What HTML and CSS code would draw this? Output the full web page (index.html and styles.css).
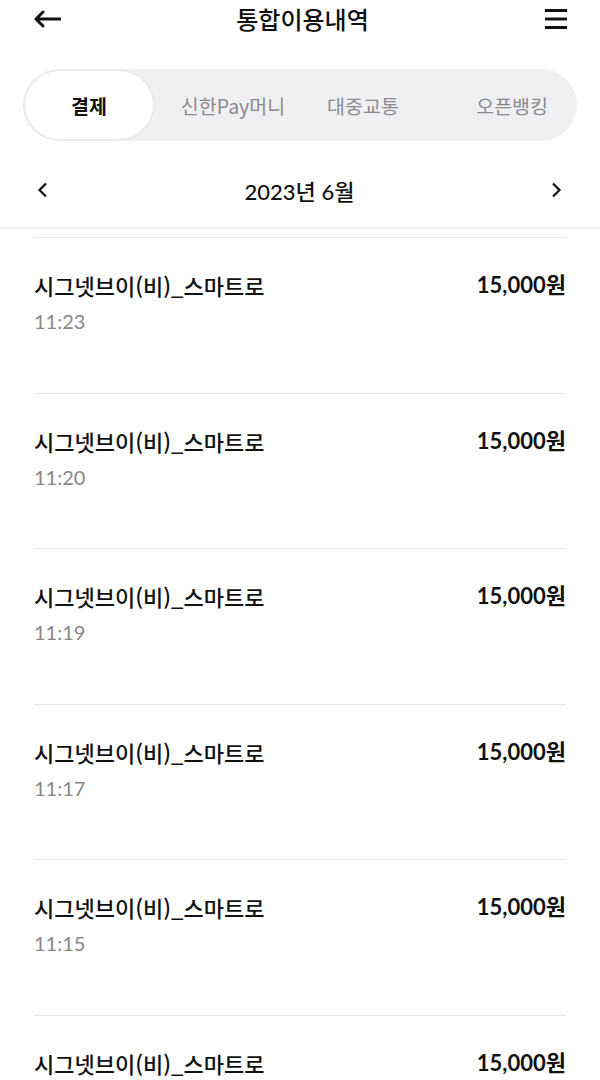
FILE: index.html
```html
<!DOCTYPE html>
<html lang="ko">
<head>
  <meta charset="UTF-8">
  <meta name="viewport" content="width=device-width, initial-scale=1.0">
  <title>통합이용내역</title>
  <link rel="stylesheet" href="styles.css">
</head>
<body>

  <header class="topbar">
    <button class="icon-btn" aria-label="뒤로">
      <svg width="28" height="18" viewBox="0 0 28 18">
        <path d="M27 9H3M10 2L3 9l7 7" fill="none" stroke="#111" stroke-width="3" stroke-linecap="round" stroke-linejoin="round"/>
      </svg>
    </button>
    <h1 class="title">통합이용내역</h1>
    <button class="icon-btn" aria-label="메뉴">
      <svg width="24" height="22" viewBox="0 0 24 22">
        <path d="M1 2.5h22M1 11h22M1 19.5h22" stroke="#111" stroke-width="3"/>
      </svg>
    </button>
  </header>

  <nav class="tabs">
    <div class="tab active">결제</div>
    <div class="tab">신한Pay머니</div>
    <div class="tab">대중교통</div>
    <div class="tab last">오픈뱅킹</div>
  </nav>

  <div class="month">
    <svg width="12" height="16" viewBox="0 0 12 16">
      <path d="M9 1.5L2.5 8 9 14.5" fill="none" stroke="#111" stroke-width="2.2"/>
    </svg>
    <span class="month-label">2023년 6월</span>
    <svg width="12" height="16" viewBox="0 0 12 16">
      <path d="M3 1.5L9.5 8 3 14.5" fill="none" stroke="#111" stroke-width="2.2"/>
    </svg>
  </div>

  <ul class="list">
    <li class="item">
      <div class="row"><span class="name">시그넷브이(비)_스마트로</span><span class="amount">15,000원</span></div>
      <div class="time">11:23</div>
    </li>
    <li class="item">
      <div class="row"><span class="name">시그넷브이(비)_스마트로</span><span class="amount">15,000원</span></div>
      <div class="time">11:20</div>
    </li>
    <li class="item">
      <div class="row"><span class="name">시그넷브이(비)_스마트로</span><span class="amount">15,000원</span></div>
      <div class="time">11:19</div>
    </li>
    <li class="item">
      <div class="row"><span class="name">시그넷브이(비)_스마트로</span><span class="amount">15,000원</span></div>
      <div class="time">11:17</div>
    </li>
    <li class="item">
      <div class="row"><span class="name">시그넷브이(비)_스마트로</span><span class="amount">15,000원</span></div>
      <div class="time">11:15</div>
    </li>
    <li class="item">
      <div class="row"><span class="name">시그넷브이(비)_스마트로</span><span class="amount">15,000원</span></div>
      <div class="time">11:12</div>
    </li>
  </ul>

</body>
</html>
```

FILE: styles.css
```css
body {
  margin: 0;
  background-color: #fff;
  color: #111;
  font-family: Lato, "Noto Sans CJK KR", sans-serif;
  height: 1080px;
  overflow: hidden;
}

.topbar {
  display: flex;
  align-items: center;
  justify-content: space-between;
  height: 38px;
  padding: 0 32px 0 33px;
}

.icon-btn {
  background: none;
  border: none;
  padding: 0;
  display: flex;
  cursor: pointer;
}

.title {
  margin: 0;
  font-size: 24px;
  font-weight: 500;
  line-height: 36px;
  font-family: "Noto Sans CJK KR", sans-serif;
}

.tabs {
  display: grid;
  grid-template-columns: 128px 160px 100px 1fr;
  align-items: center;
  height: 72px;
  margin: 31px 23px 0;
  padding: 2px;
  box-sizing: border-box;
  background-color: #f0f0f2;
  border-radius: 36px;
}

.tab {
  display: flex;
  align-items: center;
  justify-content: center;
  height: 68px;
  font-family: "Noto Sans CJK KR", sans-serif;
  font-size: 19.5px;
  color: #8a8a8e;
}

.tab.active {
  background-color: #fff;
  border-radius: 34px;
  color: #111;
  font-weight: 700;
  box-shadow: 0 0 3px rgba(0, 0, 0, 0.1);
}

.tab.last {
  justify-content: flex-end;
  padding-right: 27px;
}

.month {
  display: flex;
  align-items: center;
  justify-content: space-between;
  height: 50px;
  margin-top: 24px;
  padding: 0 38px 0 37px;
}

.month-label {
  font-size: 22px;
  font-weight: 500;
  font-family: Lato, "Noto Sans CJK KR", sans-serif;
}

.list {
  list-style: none;
  margin: 0;
  padding: 9px 34px 0;
  border-top: 13px solid #fff;
  position: relative;
}

.list::before {
  content: "";
  position: absolute;
  left: 0;
  right: 0;
  top: -1px;
  height: 2px;
  background-color: #ececec;
}

.item {
  height: 155.6px;
  box-sizing: border-box;
  border-top: 1px solid #e8e8e8;
  padding-top: 33px;
}

.row {
  display: flex;
  justify-content: space-between;
  align-items: center;
  line-height: 28px;
}

.name {
  font-family: "Noto Sans CJK KR", sans-serif;
  font-size: 22px;
  font-weight: 500;
}

.amount {
  font-size: 22px;
  font-weight: 700;
}

.time {
  margin-top: 8px;
  font-size: 20px;
  line-height: 28px;
  color: #888;
}
```
